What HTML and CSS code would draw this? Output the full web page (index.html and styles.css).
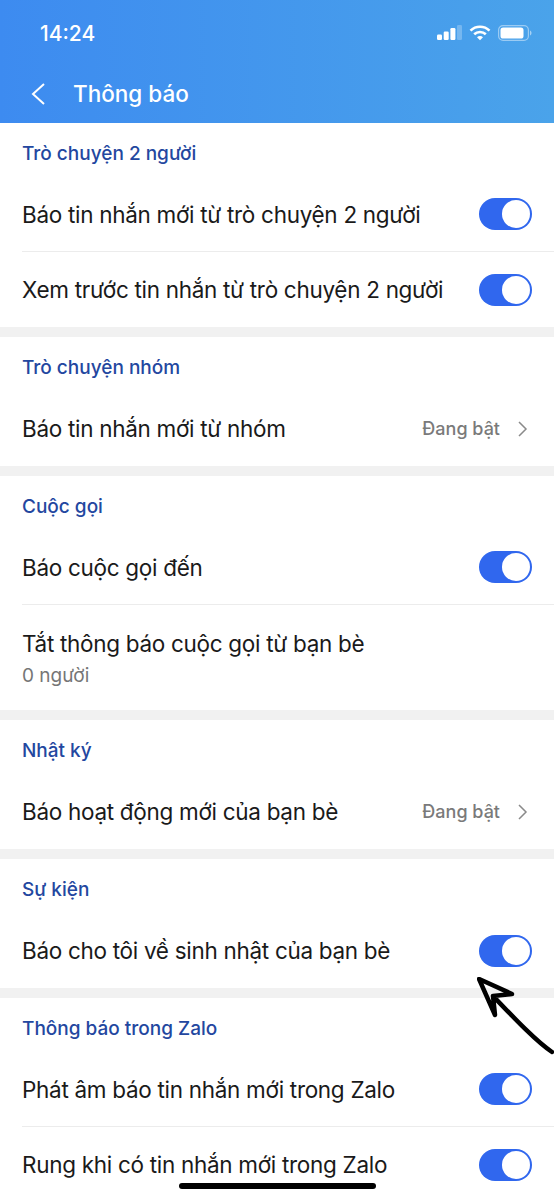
FILE: index.html
```html
<!DOCTYPE html>
<html lang="vi">
<head>
    <meta charset="UTF-8">
    <meta name="viewport" content="width=device-width, initial-scale=1.0">
    <title>Thông báo</title>
    <link rel="stylesheet" href="styles.css">
</head>
<body>
    <div class="screen">
        <header class="top">
            <div class="status-bar">
                <span class="time">14:24</span>
                <div class="status-icons">
                    <svg width="25" height="16" viewBox="0 0 25 16">
                        <rect x="0" y="9.500" width="5" height="5.500" rx="1.200" fill="#fff"/>
                        <rect x="6.700" y="6.500" width="5" height="8.500" rx="1.200" fill="#fff"/>
                        <rect x="13.400" y="3" width="5" height="12" rx="1.200" fill="#fff"/>
                        <rect x="20" y="0" width="5" height="15" rx="1.200" fill="#fff" opacity="0.25"/>
                    </svg>
                    <svg width="22" height="16" viewBox="0 0 22 16" fill="none" stroke="#fff" stroke-width="2.6">
                        <path d="M1.5 5.6a13.6 13.6 0 0 1 19 0"/>
                        <path d="M5.2 9.3a8.4 8.4 0 0 1 11.6 0"/>
                        <path d="M11 15.2l-3-3a4.2 4.2 0 0 1 6 0z" fill="#fff" stroke="none"/>
                    </svg>
                    <svg width="34" height="16" viewBox="0 0 34 16" fill="none">
                        <rect x="0.6" y="0.6" width="29.8" height="14.8" rx="4.4" stroke="#fff" stroke-opacity="0.45" stroke-width="1.2"/>
                        <rect x="2.5" y="2.5" width="23" height="11" rx="2.6" fill="#fff"/>
                        <path d="M32 5.5c1 .4 1.5 1.3 1.5 2.5s-.5 2.100-1.500 2.500z" fill="#fff" fill-opacity="0.5"/>
                    </svg>
                </div>
            </div>
            <div class="nav-bar">
                <svg class="back" width="16" height="24" viewBox="0 0 16 24" fill="none" stroke="#fff" stroke-width="2">
                    <path d="M14 2L3 12l11 10"/>
                </svg>
                <h1>Thông báo</h1>
            </div>
        </header>

        <section class="group">
            <h2>Trò chuyện 2 người</h2>
            <div class="row">
                <span class="label">Báo tin nhắn mới từ trò chuyện 2 người</span>
                <span class="toggle"></span>
            </div>
            <div class="row">
                <span class="label">Xem trước tin nhắn từ trò chuyện 2 người</span>
                <span class="toggle"></span>
            </div>
        </section>

        <section class="group">
            <h2>Trò chuyện nhóm</h2>
            <div class="row">
                <span class="label">Báo tin nhắn mới từ nhóm</span>
                <span class="value">Đang bật</span>
                <svg class="chevron" width="11" height="18" viewBox="0 0 11 18" fill="none" stroke="#8a8a8a" stroke-width="1.500">
                    <path d="M2 2l7 7-7 7"/>
                </svg>
            </div>
        </section>

        <section class="group">
            <h2>Cuộc gọi</h2>
            <div class="row">
                <span class="label">Báo cuộc gọi đến</span>
                <span class="toggle"></span>
            </div>
            <div class="row row-tall">
                <div class="stack">
                    <span class="label">Tắt thông báo cuộc gọi từ bạn bè</span>
                    <span class="sub">0 người</span>
                </div>
            </div>
        </section>

        <section class="group">
            <h2>Nhật ký</h2>
            <div class="row">
                <span class="label">Báo hoạt động mới của bạn bè</span>
                <span class="value">Đang bật</span>
                <svg class="chevron" width="11" height="18" viewBox="0 0 11 18" fill="none" stroke="#8a8a8a" stroke-width="1.500">
                    <path d="M2 2l7 7-7 7"/>
                </svg>
            </div>
        </section>

        <section class="group">
            <h2>Sự kiện</h2>
            <div class="row">
                <span class="label">Báo cho tôi về sinh nhật của bạn bè</span>
                <span class="toggle"></span>
            </div>
        </section>

        <section class="group">
            <h2>Thông báo trong Zalo</h2>
            <div class="row">
                <span class="label">Phát âm báo tin nhắn mới trong Zalo</span>
                <span class="toggle"></span>
            </div>
            <div class="row">
                <span class="label">Rung khi có tin nhắn mới trong Zalo</span>
                <span class="toggle"></span>
            </div>
        </section>

        <svg class="arrow" width="80" height="80" viewBox="0 0 80 80" fill="none" stroke="#000" stroke-width="4.500" stroke-linejoin="round" stroke-linecap="round">
            <path d="M75 75C60 65 39 43 16 19L35 17L2 2L18 38L16 19"/>
        </svg>
        <div class="home-bar"></div>
    </div>
</body>
</html>
```

FILE: styles.css
```css
* {
    margin: 0;
    padding: 0;
    box-sizing: border-box;
}

body {
    font-family: 'Inter', 'Liberation Sans', sans-serif;
    background-color: #fff;
    color: #1a1a1a;
}

.screen {
    position: relative;
    width: 554px;
    height: 1200px;
    overflow: hidden;
    background-color: #f1f1f1;
}

.top {
    height: 123px;
    background: linear-gradient(90deg, #3d8bf0, #4aa3ea);
    color: #fff;
}

.status-bar {
    display: flex;
    justify-content: space-between;
    align-items: center;
    height: 66px;
    padding: 0 22px 0 40px;
}

.time {
    font-size: 21px;
    font-weight: 500;
}

.status-icons {
    display: flex;
    align-items: center;
    gap: 7px;
}

.nav-bar {
    display: flex;
    align-items: center;
    height: 57px;
    padding: 0 0 2px 30px;
}

.back {
    margin-right: 27px;
}

h1 {
    font-size: 22.5px;
    font-weight: 500;
}

.group {
    background-color: #fff;
    margin-bottom: 10px;
}

h2 {
    height: 54px;
    padding: 19px 22px 0;
    font-size: 19px;
    line-height: 23px;
    font-weight: 500;
    color: #23479f;
}

.row {
    display: flex;
    align-items: center;
    height: 75px;
    margin-left: 22px;
    padding-right: 22px;
    border-bottom: 1px solid #ececec;
}

.row:last-child {
    border-bottom: none;
}

.row-tall {
    height: 105px;
    padding-top: 2px;
}

.label {
    flex: 1;
    font-size: 22.5px;
    letter-spacing: -0.3px;
}

.stack {
    display: flex;
    flex-direction: column;
    gap: 7px;
}

.sub {
    font-size: 19px;
    color: #767676;
}

.value {
    font-size: 18px;
    font-weight: 500;
    color: #7a7a7a;
    margin-right: 17px;
}

.chevron {
    margin-right: 4px;
}

.toggle {
    position: relative;
    width: 53px;
    height: 32px;
    border-radius: 16px;
    background-color: #3067ee;
}

.toggle::after {
    content: "";
    position: absolute;
    top: 2px;
    right: 2px;
    width: 28px;
    height: 28px;
    border-radius: 50%;
    background-color: #fff;
}

.arrow {
    position: absolute;
    left: 477px;
    top: 977px;
}

.home-bar {
    position: absolute;
    left: 179px;
    top: 1183px;
    width: 197px;
    height: 6px;
    border-radius: 3px;
    background-color: #000;
}
```
